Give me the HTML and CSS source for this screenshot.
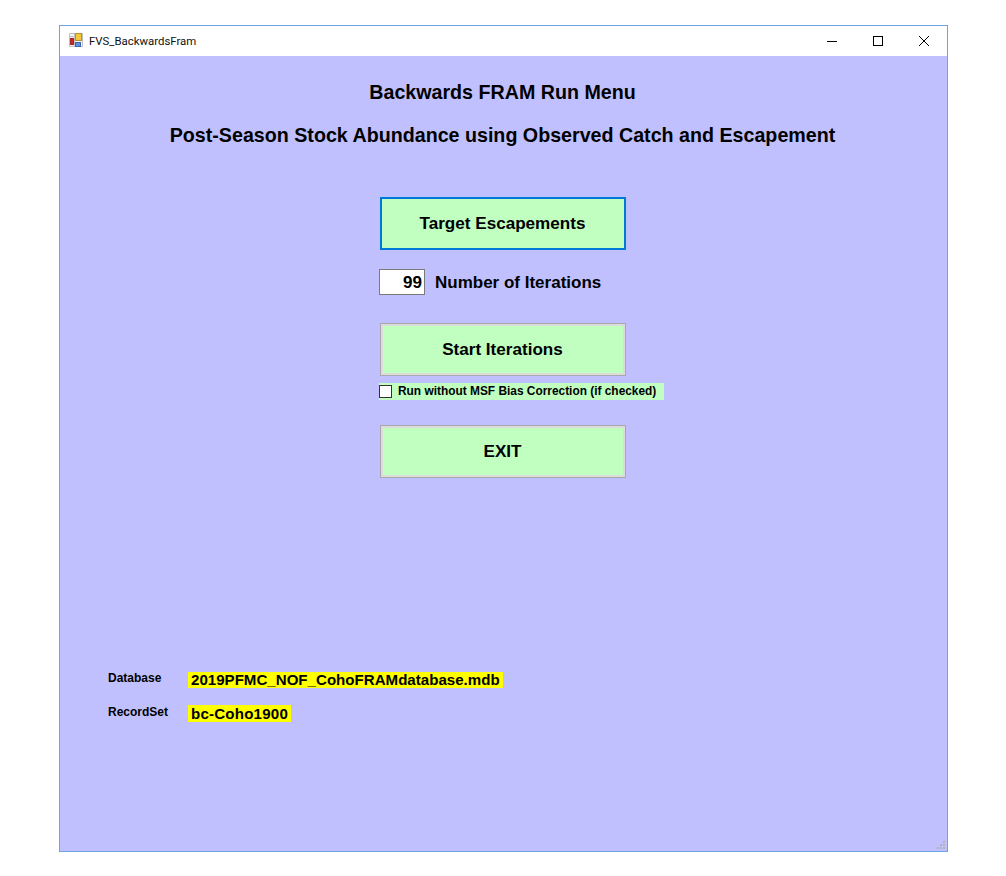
FILE: index.html
```html
<!DOCTYPE html>
<html lang="en">
<head>
<meta charset="utf-8">
<title>FVS_BackwardsFram</title>
<link rel="stylesheet" href="styles.css">
</head>
<body>
<div class="window">
  <div class="titlebar">
    <svg class="app-icon" width="16" height="16" viewBox="0 0 16 16">
      <path d="M0.5 0.5h13v13h-13zM0.5 3.5h5M0.5 11.5h5M5.5 0.5v13" fill="#f4f4f4" stroke="#c0c0c0"/>
      <rect x="6.5" y="0.5" width="6" height="7" fill="#f4c838" stroke="#b89030"/>
      <rect x="1.5" y="5.5" width="3" height="6" fill="#d42020" stroke="#a02828"/>
      <rect x="6.5" y="9.5" width="5" height="4" fill="#5a90e0" stroke="#3a68b0"/>
    </svg>
    <span class="title-text">FVS_BackwardsFram</span>
    <div class="controls">
      <svg class="ctl" width="46" height="30" viewBox="0 0 46 30"><path d="M18 15.5h10" stroke="#000" fill="none"/></svg>
      <svg class="ctl" width="46" height="30" viewBox="0 0 46 30"><rect x="18.5" y="10.5" width="9" height="9" stroke="#000" fill="none"/></svg>
      <svg class="ctl" width="46" height="30" viewBox="0 0 46 30"><path d="M18 10l10 10M28 10l-10 10" stroke="#000" fill="none"/></svg>
    </div>
  </div>
  <main class="client">
    <h1 class="heading">Backwards FRAM Run Menu</h1>
    <h2 class="heading sub">Post-Season Stock Abundance using Observed Catch and Escapement</h2>
    <div class="panel">
      <button class="btn focused" type="button">Target Escapements</button>
      <div class="iter-row">
        <span class="num-box">99</span>
        <span class="iter-label">Number of Iterations</span>
      </div>
      <button class="btn" type="button">Start Iterations</button>
      <label class="check-row"><span class="check"></span><span class="check-label">Run without MSF Bias Correction (if checked)</span></label>
      <button class="btn exit" type="button">EXIT</button>
    </div>
    <div class="info">
      <div class="info-row"><span class="info-label">Database</span><span class="info-value">2019PFMC_NOF_CohoFRAMdatabase.mdb</span></div>
      <div class="info-row"><span class="info-label">RecordSet</span><span class="info-value">bc-Coho1900</span></div>
    </div>
    <div class="grip">
      <svg width="12" height="12" viewBox="0 0 12 12"><path d="M8 2h2v2H8zM5 5h2v2H5zM8 5h2v2H8zM2 8h2v2H2zM5 8h2v2H5zM8 8h2v2H8z" fill="#b4b4b8"/></svg>
    </div>
  </main>
</div>
</body>
</html>
```
FILE: styles.css
```css
* { box-sizing: border-box; }
html, body { margin: 0; background: #fff; }
body { padding: 25px 0 0 59px; height: 876px; font-family: "Liberation Sans", Arial, sans-serif; color: #000; }
.window { width: 889px; height: 827px; border: 1px solid #6ba5e7; display: flex; flex-direction: column; }
.titlebar { height: 30px; background: #fff; display: flex; align-items: center; padding-left: 9px; flex: none; }
.app-icon { flex: none; }
.title-text { font-family: Roboto, "Liberation Sans", sans-serif; font-size: 11.4px; margin-left: 4px; color: #111; }
.controls { margin-left: auto; display: flex; }
.ctl { display: block; }
.client { position: relative; flex: 1; background: #c0c0ff; display: flex; flex-direction: column; }
.heading { margin: 0; padding-right: 2px; font-size: 19.67px; font-weight: bold; line-height: 22px; text-align: center; }
h1.heading { margin-top: 25px; }
.sub { margin-top: 21px; }
.panel { width: 285px; margin: 51px 0 0 319px; display: flex; flex-direction: column; align-items: flex-start; }
.btn { display: block; width: 246px; height: 53px; margin: 0 0 0 1px; padding: 0 1px 0 0; background: #c0ffc0; border: 3px solid #dcdcdc; outline: 1px solid #a8a8a8; outline-offset: -1px; font: bold 17.1px/22px "Liberation Sans", Arial, sans-serif; color: #000; text-align: center; }
.btn.focused { border: 2px solid #0078d7; outline: none; }
.iter-row { display: flex; align-items: center; height: 26px; margin-top: 19px; }
.num-box { width: 46px; height: 26px; background: #fff; border: 1px solid #7a7a7a; font-size: 17px; font-weight: bold; line-height: 26px; text-align: right; padding-right: 2px; }
.iter-label { font-size: 17px; font-weight: bold; margin: 2px 0 0 10px; }
.iter-row + .btn { margin-top: 28px; }
.check-row { display: flex; align-items: center; width: 285px; height: 17px; margin-top: 7px; background: #c0ffc0; }
.check { width: 13px; height: 13px; margin-top: -1px; background: #fff; border: 1px solid #333; flex: none; }
.check-label { font-size: 11.9px; font-weight: bold; margin: -2px 0 0 6px; white-space: nowrap; }
.exit { margin-top: 25px; }
.info { margin: 192px 0 0 48px; display: flex; flex-direction: column; gap: 14px; }
.info-row { display: flex; align-items: flex-start; height: 20px; }
.info-label { width: 80px; margin-top: 1px; font-size: 12px; font-weight: bold; line-height: 14px; }
.info-value { height: 16px; margin-top: 2px; padding: 0 3px; background: #ffff00; font-size: 15.1px; font-weight: bold; line-height: 16px; }
.info-row + .info-row > .info-value { height: 17px; margin-top: 1px; line-height: 17px; letter-spacing: 0.2px; }
.grip { position: absolute; right: 0; bottom: 0; width: 12px; height: 12px; }
.grip svg { display: block; }
```
